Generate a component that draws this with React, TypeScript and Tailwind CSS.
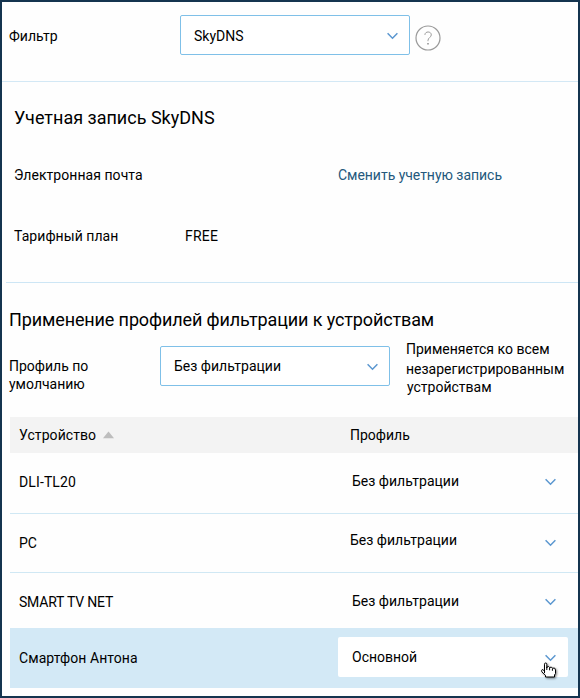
import React from 'react';

function Chevron({ className = '' }: { className?: string }) {
  return (
    <svg className={`block shrink-0 ${className}`} width="11" height="8" viewBox="0 0 11 8" fill="none">
      <path d="M0.6 1.2 L5.5 6.2 L10.4 1.2" stroke="#5b97d0" strokeWidth="1.5" />
    </svg>
  );
}

function Select({ value, className = '', textClass = '' }: { value: string; className?: string; textClass?: string }) {
  return (
    <div className={`flex h-10 w-[230px] shrink-0 items-start justify-between rounded-[2px] border border-[#7fc0e8] bg-white pl-[13px] pr-[11px] pt-[9px] ${className}`}>
      <span className={textClass}>{value}</span>
      <Chevron className="mt-[7px]" />
    </div>
  );
}

function HelpIcon({ className = '' }: { className?: string }) {
  return (
    <svg className={`block shrink-0 ${className}`} width="26" height="26" viewBox="0 0 26 26" fill="none" stroke="#9a9a9a">
      <circle cx="13" cy="13" r="12" strokeWidth="1.2" />
      <path d="M9.9 9.9 C9.9 6 16.3 6 16.3 9.9 C16.3 12.3 13 12.6 13 15.4 V16.2" strokeWidth="1" />
      <path d="M13 18 V19.6" strokeWidth="1.7" />
    </svg>
  );
}

function HandCursor() {
  return (
    <svg className="absolute left-[202px] top-[25px] drop-shadow-[1px_1px_1px_rgba(0,0,0,0.5)]" width="18" height="18" viewBox="0 0 18 18">
      <path
        d="M4.5 11 V2.2 Q4.5 1 5.6 1 Q6.8 1 6.8 2.2 V6 V5.2 Q8.9 3.7 9.6 5.5 Q11.7 4.4 12.4 6.2 Q15.5 5.2 15.5 8 V11.5 L14.5 13 V15 H5.5 V13.3 L1.8 9.8 Q1.2 8.2 2.2 7.6 Q3.2 7.4 4.5 9.2"
        fill="white" stroke="black" strokeWidth="1" strokeLinejoin="round"
      />
      <path d="M6.8 5.5 V8 M9.6 5.8 V8.3 M12.4 6.5 V8.8" stroke="black" strokeWidth="1" />
    </svg>
  );
}

function DeviceRow({ name, profile, rowClass, nameClass, profileClass }: {
  name: string; profile: string; rowClass: string; nameClass: string; profileClass: string;
}) {
  return (
    <div className={`flex items-start pl-[9px] ${rowClass}`}>
      <span className={`w-[331px] shrink-0 pt-[19px] ${nameClass}`}>{name}</span>
      <span className={`w-[195px] shrink-0 ${profileClass}`}>{profile}</span>
      <Chevron className="mt-[25px]" />
    </div>
  );
}

export default function App() {
  return (
    <main className="h-[698px] w-[580px] overflow-hidden border-2 border-[#14344f] bg-[#fefefe] font-['Roboto',sans-serif] text-sm leading-5 text-black">
      <section className="flex h-20 items-start border-b border-[#d3e8f5] pl-[7px]">
        <span className="w-[171px] pt-6">Фильтр</span>
        <Select value="SkyDNS" className="mt-[13px]" textClass="pt-px" />
        <HelpIcon className="ml-[5px] mt-[23px]" />
      </section>

      <section className="ml-1 h-[201px] border-b border-[#cde6f5] pl-2 pt-6">
        <h2 className="text-lg leading-6">Учетная запись SkyDNS</h2>
        <div className="mt-[35px] flex">
          <span className="w-[324px] tracking-[0.05px]">Электронная почта</span>
          <a className="tracking-[-0.03px] text-[#24587c]">Сменить учетную запись</a>
        </div>
        <div className="mt-[41px] flex">
          <span className="w-[171px] tracking-[0.06px]">Тарифный план</span>
          <span className="tracking-[0.25px]">FREE</span>
        </div>
      </section>

      <section className="pl-[7px] pt-[25px]">
        <h2 className="text-lg leading-6 tracking-[-0.12px]">Применение профилей фильтрации к устройствам</h2>
        <div className="flex h-[85px] items-start">
          <div className="w-[151px] pt-[25px] leading-[18px]">Профиль по<br />умолчанию</div>
          <Select value="Без фильтрации" className="mt-[14px]" />
          <div className="ml-4 pt-[7px]">
            <div>Применяется ко всем</div>
            <div>незарегистрированным</div>
            <div className="-mt-[2px] pl-px">устройствам</div>
          </div>
        </div>
      </section>

      <section className="ml-2">
        <div className="flex h-9 bg-[#f3f3f3] pl-[9px] pt-2">
          <div className="flex w-[331px]">
            <span className="tracking-[0.08px]">Устройство</span>
            <svg className="ml-[7px] mt-[6px]" width="11" height="8" viewBox="0 0 11 8"><path d="M0 7.3 L5.5 0.5 L11 7.3Z" fill="#bdbdbd" /></svg>
          </div>
          <span>Профиль</span>
        </div>
        <DeviceRow name="DLI-TL20" profile="Без фильтрации" rowClass="h-[61px] border-b border-[#d0e8f4]" nameClass="tracking-[0.12px]" profileClass="pl-[2px] pt-[18px]" />
        <DeviceRow name="PC" profile="Без фильтрации" rowClass="h-[59px] border-b border-[#d0e8f4]" nameClass="" profileClass="pt-4" />
        <DeviceRow name="SMART TV NET" profile="Без фильтрации" rowClass="h-[55px]" nameClass="tracking-[-0.2px]" profileClass="pl-[2px] pt-[18px]" />
        <div className="flex h-[60px] items-start bg-[#d3e9f6] pl-[9px]">
          <span className="w-[319px] pt-5 tracking-[0.07px]">Смартфон Антона</span>
          <div className="relative mt-[9px] flex h-10 w-[230px] items-start justify-between rounded-[2px] bg-white pl-[14px] pr-3 pt-[10px]">
            <span>Основной</span>
            <Chevron className="mt-[7px]" />
            <HandCursor />
          </div>
        </div>
      </section>
    </main>
  );
}
